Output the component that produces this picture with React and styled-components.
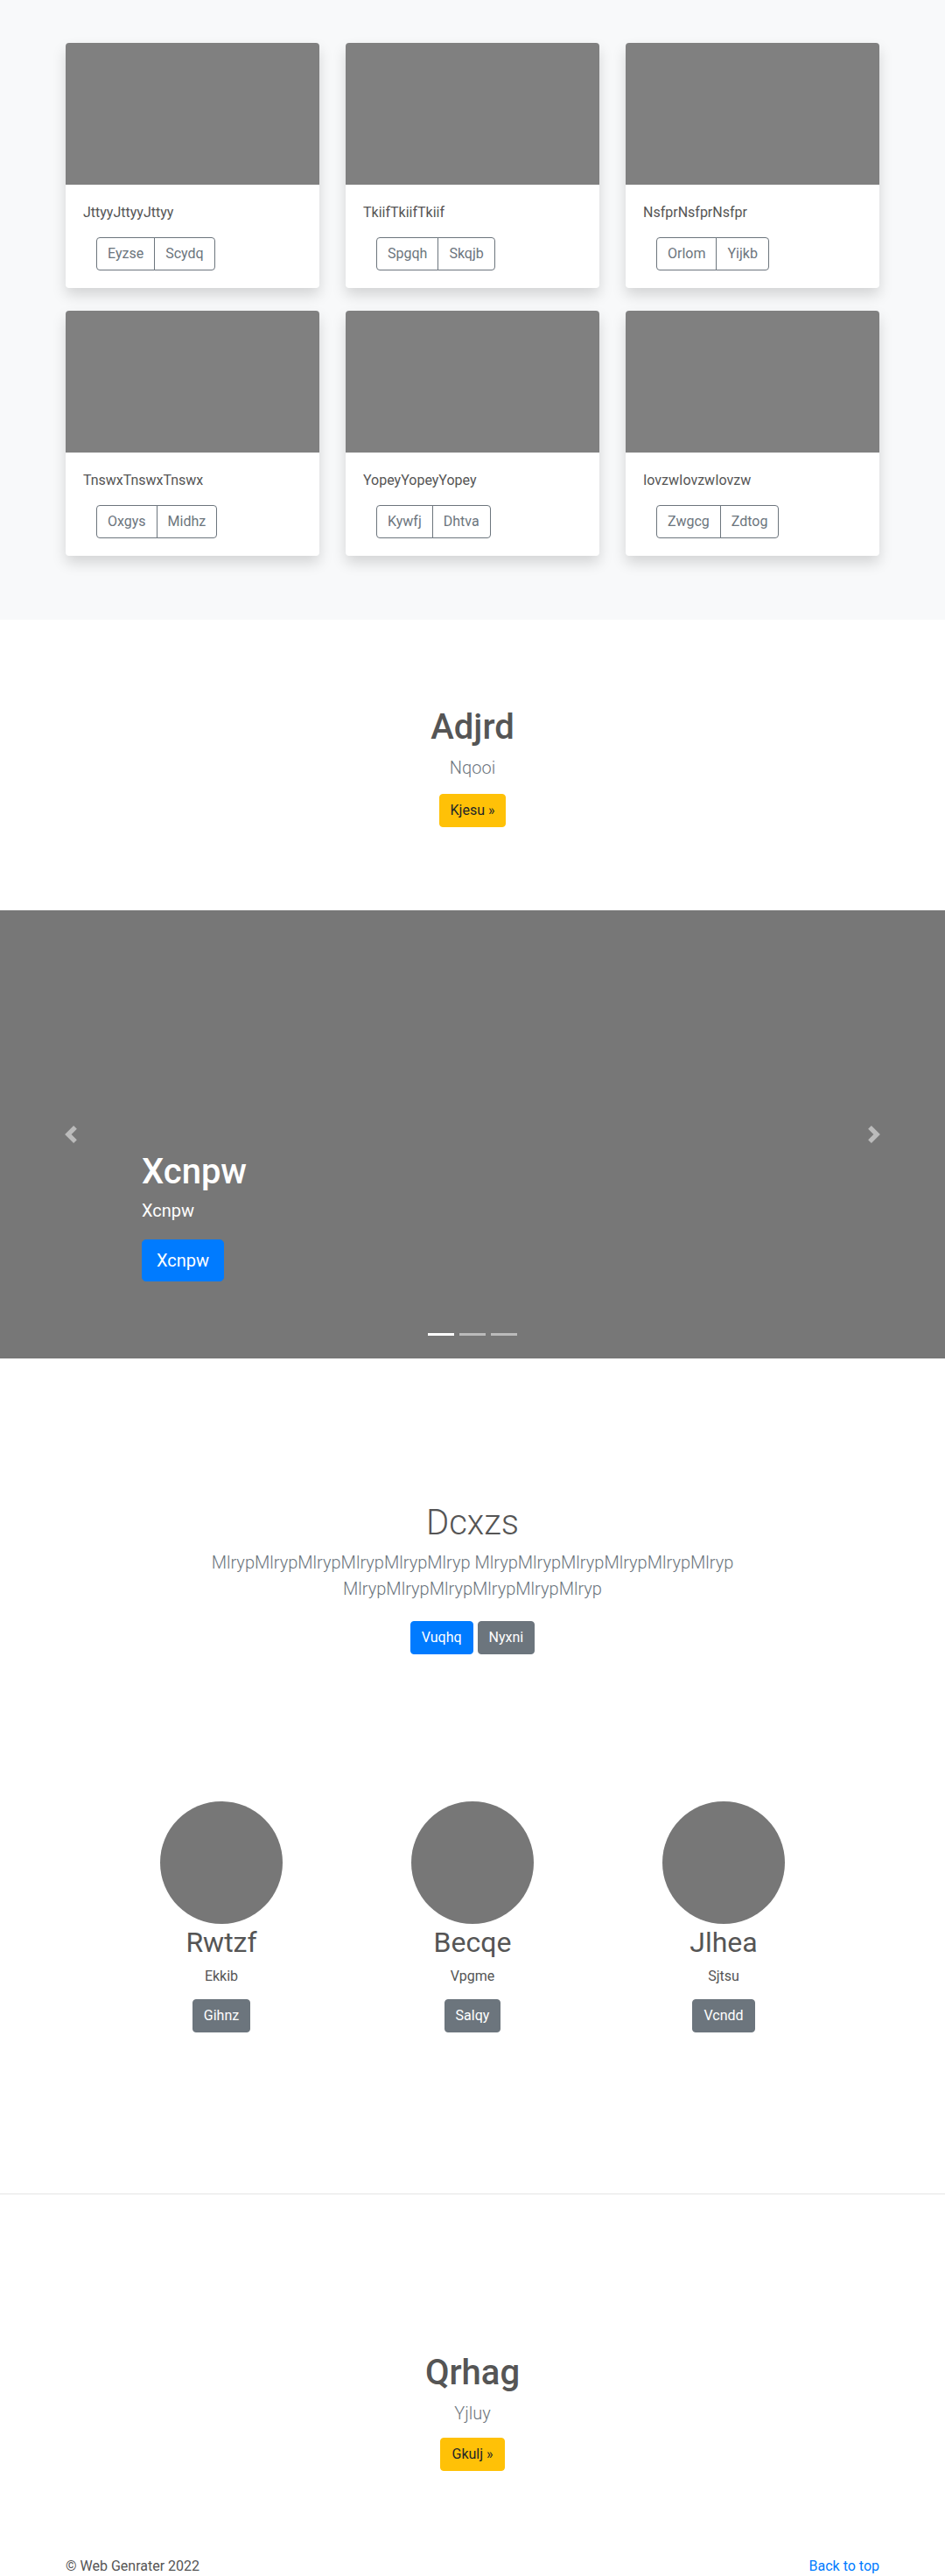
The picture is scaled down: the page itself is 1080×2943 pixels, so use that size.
import * as React from 'react';
import styled, { createGlobalStyle } from 'styled-components';

const GlobalStyle = createGlobalStyle`
    html, body {
        margin: 0;
        padding: 0;
        background: #fff;
    }
    body {
        font-family: Roboto, "Liberation Sans", sans-serif;
        font-size: 16px;
        line-height: 1.5;
        color: #555;
    }
    * {
        box-sizing: border-box;
    }
`;

const Album = styled.section`
    background: #f8f9fa;
    padding: 49px 0 73px;
`;

const Container = styled.div`
    width: ${props => props.width || 930}px;
    margin: 0 auto;
`;

const CardGrid = styled.div`
    display: grid;
    grid-template-columns: repeat(3, 290px);
    column-gap: 30px;
    row-gap: 26px;
`;

const Card = styled.div`
    background: #fff;
    border-radius: 4px;
    overflow: hidden;
    box-shadow: 0 0.5rem 1rem rgba(0, 0, 0, 0.15);
`;

const Thumb = styled.div`
    height: 162px;
    background: #808080;
`;

const CardBody = styled.div`
    padding: 20px;
`;

const CardText = styled.p`
    margin: 0 0 16px;
    font-size: 16px;
    line-height: 24px;
    color: #555;
`;

const BtnGroup = styled.div`
    display: inline-flex;
    margin-left: 15px;
`;

const OutlineBtn = styled.button`
    font-family: inherit;
    font-size: 16px;
    line-height: 24px;
    padding: 6px 12px;
    color: #6c757d;
    background: transparent;
    border: 1px solid #6c757d;
    border-radius: 0;
    &:first-child {
        border-radius: 4px 0 0 4px;
    }
    &:last-child {
        border-radius: 0 4px 4px 0;
        margin-left: -1px;
    }
`;

const Jumbo = styled.section`
    text-align: center;
    padding: ${props => props.top}px 0 ${props => props.bottom}px;
`;

const Heading = styled.h1`
    margin: 0 0 ${props => props.gap || 7}px;
    font-size: 40px;
    line-height: 48px;
    font-weight: ${props => (props.light ? 300 : 500)};
    color: #555;
`;

const Lead = styled.p`
    margin: 0 auto ${props => props.gap || 13}px;
    max-width: ${props => props.width || 610}px;
    font-size: 20px;
    line-height: 30px;
    font-weight: 300;
    color: #6c757d;
`;

const variants = {
    primary: { bg: '#007bff', fg: '#fff' },
    secondary: { bg: '#6c757d', fg: '#fff' },
    warning: { bg: '#ffc107', fg: '#212529' },
};

const Btn = styled.button`
    font-family: inherit;
    font-size: ${props => (props.large ? 20 : 16)}px;
    line-height: ${props => (props.large ? 30 : 24)}px;
    padding: ${props => (props.large ? '8px 16px' : '6px 12px')};
    border-radius: ${props => (props.large ? 4.8 : 4)}px;
    border: 1px solid ${props => variants[props.kind].bg};
    background: ${props => variants[props.kind].bg};
    color: ${props => variants[props.kind].fg};
    font-weight: 400;
`;

const BtnRow = styled.div`
    display: flex;
    justify-content: center;
    gap: 5px;
`;

const Carousel = styled.div`
    position: relative;
    height: 512px;
    background: #777;
    display: flex;
    flex-direction: column;
    justify-content: flex-end;
    align-items: flex-start;
    padding: 0 162px 88px;
`;

const CaptionTitle = styled.h1`
    margin: 0 0 5px;
    font-size: 40px;
    line-height: 48px;
    font-weight: 500;
    color: #fff;
`;

const CaptionText = styled.p`
    margin: 0 0 18px;
    font-size: 20px;
    line-height: 30px;
    color: #fff;
`;

const Control = styled.div`
    position: absolute;
    top: 0;
    bottom: 0;
    ${props => (props.side === 'left' ? 'left: 0;' : 'right: 0;')}
    width: 15%;
    display: flex;
    align-items: center;
    justify-content: center;
    opacity: 0.5;
    svg {
        width: 20px;
        height: 20px;
    }
`;

const Indicators = styled.ol`
    position: absolute;
    left: 0;
    right: 0;
    bottom: 0;
    margin: 0 0 16px;
    padding: 0;
    list-style: none;
    display: flex;
    justify-content: center;
`;

const Indicator = styled.li`
    width: 30px;
    height: 3px;
    margin: 10px 3px;
    background: #fff;
    opacity: ${props => (props.active ? 1 : 0.5)};
`;

const Intro = styled.section`
    text-align: center;
    padding: 164px 0 0;
`;

const Marketing = styled.section`
    display: grid;
    grid-template-columns: repeat(3, 287px);
    justify-content: center;
    padding: 168px 0 184px;
`;

const Feature = styled.div`
    display: flex;
    flex-direction: column;
    align-items: center;
    text-align: center;
`;

const Avatar = styled.div`
    width: 140px;
    height: 140px;
    border-radius: 50%;
    background: #777;
`;

const FeatureTitle = styled.h2`
    margin: 2px 0 8px;
    font-size: 32px;
    line-height: 38px;
    font-weight: 400;
    color: #555;
`;

const FeatureText = styled.p`
    margin: 0 0 14px;
    font-size: 16px;
    line-height: 24px;
    color: #555;
`;

const Divider = styled.hr`
    margin: 0;
    border: 0;
    border-top: 1px solid rgba(0, 0, 0, 0.1);
`;

const Footer = styled.footer`
    padding-top: 47px;
`;

const FooterRow = styled.div`
    display: flex;
    justify-content: space-between;
    font-size: 16px;
    line-height: 24px;
`;

const FooterText = styled.span`
    color: #555;
`;

const TopLink = styled.a`
    color: #007bff;
    text-decoration: none;
`;

const cards = [
    { text: 'JttyyJttyyJttyy', buttons: ['Eyzse', 'Scydq'] },
    { text: 'TkiifTkiifTkiif', buttons: ['Spgqh', 'Skqjb'] },
    { text: 'NsfprNsfprNsfpr', buttons: ['Orlom', 'Yijkb'] },
    { text: 'TnswxTnswxTnswx', buttons: ['Oxgys', 'Midhz'] },
    { text: 'YopeyYopeyYopey', buttons: ['Kywfj', 'Dhtva'] },
    { text: 'IovzwIovzwIovzw', buttons: ['Zwgcg', 'Zdtog'] },
];

const features = [
    { title: 'Rwtzf', text: 'Ekkib', button: 'Gihnz' },
    { title: 'Becqe', text: 'Vpgme', button: 'Salqy' },
    { title: 'Jlhea', text: 'Sjtsu', button: 'Vcndd' },
];

const Chevron = ({ dir }) => (
    <svg viewBox="0 0 8 8" fill="#fff">
        {dir === 'left'
            ? <path d="M5.25 0l-4 4 4 4 1.5-1.5L4.25 4l2.5-2.5L5.25 0z" />
            : <path d="M2.75 0l-1.5 1.5L3.75 4l-2.5 2.5L2.75 8l4-4-4-4z" />}
    </svg>
);

export default function App() {
    return <>
        <GlobalStyle />
        <Album>
            <Container>
                <CardGrid>
                    {cards.map((card, idx) => (
                        <Card key={idx}>
                            <Thumb />
                            <CardBody>
                                <CardText>{card.text}</CardText>
                                <BtnGroup>
                                    {card.buttons.map(label => (
                                        <OutlineBtn key={label}>{label}</OutlineBtn>
                                    ))}
                                </BtnGroup>
                            </CardBody>
                        </Card>
                    ))}
                </CardGrid>
            </Container>
        </Album>

        <Jumbo top={99} bottom={95}>
            <Heading>Adjrd</Heading>
            <Lead gap={15}>Nqooi</Lead>
            <Btn kind="warning">{'Kjesu »'}</Btn>
        </Jumbo>

        <Carousel>
            <Control side="left"><Chevron dir="left" /></Control>
            <CaptionTitle>Xcnpw</CaptionTitle>
            <CaptionText>Xcnpw</CaptionText>
            <Btn kind="primary" large>Xcnpw</Btn>
            <Control side="right"><Chevron dir="right" /></Control>
            <Indicators>
                <Indicator active />
                <Indicator />
                <Indicator />
            </Indicators>
        </Carousel>

        <Intro>
            <Heading light gap={6}>Dcxzs</Heading>
            <Lead width={630} gap={22}>
                MlrypMlrypMlrypMlrypMlrypMlryp MlrypMlrypMlrypMlrypMlrypMlryp MlrypMlrypMlrypMlrypMlrypMlryp
            </Lead>
            <BtnRow>
                <Btn kind="primary">Vuqhq</Btn>
                <Btn kind="secondary">Nyxni</Btn>
            </BtnRow>
        </Intro>

        <Marketing>
            {features.map(item => (
                <Feature key={item.title}>
                    <Avatar />
                    <FeatureTitle>{item.title}</FeatureTitle>
                    <FeatureText>{item.text}</FeatureText>
                    <Btn kind="secondary">{item.button}</Btn>
                </Feature>
            ))}
        </Marketing>

        <Divider />

        <Jumbo top={180} bottom={50}>
            <Heading>Qrhag</Heading>
            <Lead>Yjluy</Lead>
            <Btn kind="warning">{'Gkulj »'}</Btn>
        </Jumbo>

        <Footer>
            <Container>
                <FooterRow>
                    <FooterText>© Web Genrater 2022</FooterText>
                    <TopLink href="#">Back to top</TopLink>
                </FooterRow>
            </Container>
        </Footer>
    </>
}
